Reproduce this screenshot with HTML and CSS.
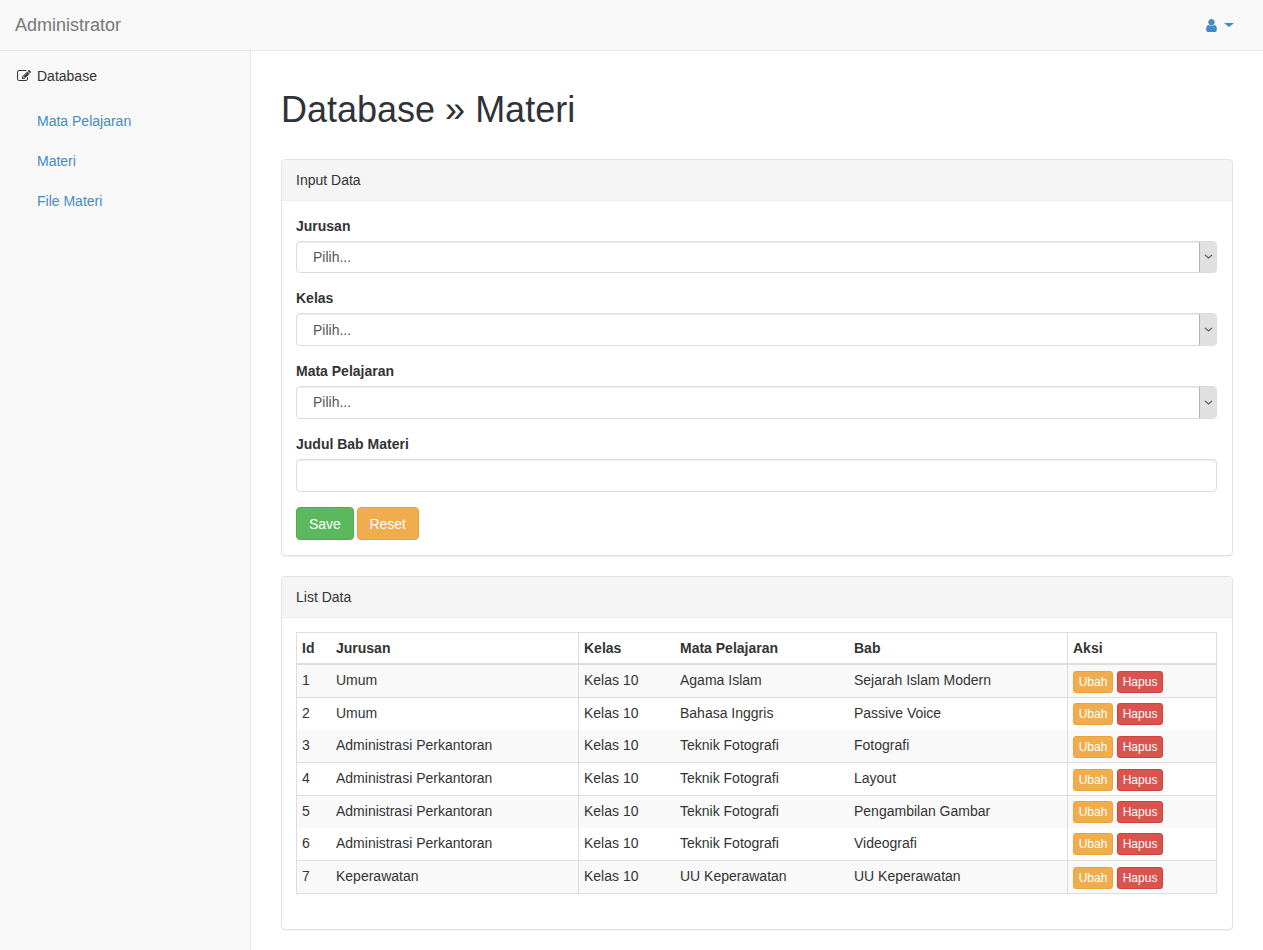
FILE: index.html
```html
<!DOCTYPE html>
<html lang="id">
<head>
<meta charset="utf-8">
<title>Database » Materi</title>
<link rel="stylesheet" href="styles.css">
</head>
<body>
<nav class="navbar">
  <a class="brand" href="#">Administrator</a>
  <a class="user-menu" href="#">
    <svg class="icon-user" viewBox="0 0 1792 1792"><path d="M1536 1399q0 109-62.5 187t-150.5 78h-854q-88 0-150.5-78t-62.5-187q0-85 8.5-160.5t31.5-152 58.5-131 94-89 134.5-34.5q131 128 313 128t313-128q76 0 134.5 34.5t94 89 58.5 131 31.5 152 8.5 160.5zm-256-887q0 159-112.5 271.5t-271.5 112.5-271.5-112.5-112.5-271.5 112.5-271.5 271.5-112.5 271.5 112.5 112.5 271.5z"/></svg>
    <span class="caret"></span>
  </a>
</nav>
<div class="layout">
  <aside class="sidebar">
    <a class="nav-top" href="#">
      <svg class="icon-edit" viewBox="0 0 1792 1792"><path d="M888 1184l116-116-152-152-116 116v56h96v96h56zm440-720q-16-16-33 1l-350 350q-17 17-1 33t33-1l350-350q17-17 1-33zm80 594v190q0 119-84.5 203.5t-203.5 84.5h-832q-119 0-203.5-84.5t-84.5-203.5v-832q0-119 84.5-203.5t203.5-84.5h832q63 0 117 25 15 7 18 23 3 17-9 29l-49 49q-14 14-32 8-23-6-45-6h-832q-66 0-113 47t-47 113v832q0 66 47 113t113 47h832q66 0 113-47t47-113v-126q0-13 9-22l64-64q15-15 35-7t20 29zm-96-738l288 288-672 672h-288v-288zm444 132l-92 92-288-288 92-92q28-28 68-28t68 28l152 152q28 28 28 68t-28 68z"/></svg>
      <span>Database</span>
    </a>
    <ul class="nav-sub">
      <li><a href="#">Mata Pelajaran</a></li>
      <li><a href="#">Materi</a></li>
      <li><a href="#">File Materi</a></li>
    </ul>
  </aside>
  <main class="content">
    <h1 class="page-title">Database » Materi</h1>

    <section class="panel">
      <div class="panel-heading">Input Data</div>
      <form class="panel-body">
        <div class="form-group">
          <label>Jurusan</label>
          <div class="select-wrap">
            <select class="control"><option>Pilih...</option></select>
            <span class="select-arrow"><svg viewBox="0 0 10 6"><path d="M1 1l4 3.4L9 1"/></svg></span>
          </div>
        </div>
        <div class="form-group">
          <label>Kelas</label>
          <div class="select-wrap">
            <select class="control"><option>Pilih...</option></select>
            <span class="select-arrow"><svg viewBox="0 0 10 6"><path d="M1 1l4 3.4L9 1"/></svg></span>
          </div>
        </div>
        <div class="form-group">
          <label>Mata Pelajaran</label>
          <div class="select-wrap">
            <select class="control"><option>Pilih...</option></select>
            <span class="select-arrow"><svg viewBox="0 0 10 6"><path d="M1 1l4 3.4L9 1"/></svg></span>
          </div>
        </div>
        <div class="form-group">
          <label>Judul Bab Materi</label>
          <input class="control control-text" type="text">
        </div>
        <div class="actions">
          <button type="button" class="btn btn-save">Save</button>
          <button type="button" class="btn btn-reset">Reset</button>
        </div>
      </form>
    </section>

    <section class="panel panel-list">
      <div class="panel-heading">List Data</div>
      <div class="panel-body">
        <table class="data-table">
          <colgroup>
            <col class="col-id"><col class="col-jurusan"><col class="col-kelas"><col class="col-mapel"><col class="col-bab"><col>
          </colgroup>
          <thead>
            <tr><th>Id</th><th class="edge">Jurusan</th><th>Kelas</th><th>Mata Pelajaran</th><th class="edge">Bab</th><th>Aksi</th></tr>
          </thead>
          <tbody>
            <tr class="odd"><td>1</td><td class="edge">Umum</td><td>Kelas 10</td><td>Agama Islam</td><td class="edge">Sejarah Islam Modern</td><td class="acts"><a class="mini mini-edit">Ubah</a> <a class="mini mini-del">Hapus</a></td></tr>
            <tr class="lined"><td>2</td><td class="edge">Umum</td><td>Kelas 10</td><td>Bahasa Inggris</td><td class="edge">Passive Voice</td><td class="acts"><a class="mini mini-edit">Ubah</a> <a class="mini mini-del">Hapus</a></td></tr>
            <tr class="odd"><td>3</td><td class="edge">Administrasi Perkantoran</td><td>Kelas 10</td><td>Teknik Fotografi</td><td class="edge">Fotografi</td><td class="acts"><a class="mini mini-edit">Ubah</a> <a class="mini mini-del">Hapus</a></td></tr>
            <tr class="lined"><td>4</td><td class="edge">Administrasi Perkantoran</td><td>Kelas 10</td><td>Teknik Fotografi</td><td class="edge">Layout</td><td class="acts"><a class="mini mini-edit">Ubah</a> <a class="mini mini-del">Hapus</a></td></tr>
            <tr class="odd lined"><td>5</td><td class="edge">Administrasi Perkantoran</td><td>Kelas 10</td><td>Teknik Fotografi</td><td class="edge">Pengambilan Gambar</td><td class="acts"><a class="mini mini-edit">Ubah</a> <a class="mini mini-del">Hapus</a></td></tr>
            <tr><td>6</td><td class="edge">Administrasi Perkantoran</td><td>Kelas 10</td><td>Teknik Fotografi</td><td class="edge">Videografi</td><td class="acts"><a class="mini mini-edit">Ubah</a> <a class="mini mini-del">Hapus</a></td></tr>
            <tr class="odd lined"><td>7</td><td class="edge">Keperawatan</td><td>Kelas 10</td><td>UU Keperawatan</td><td class="edge">UU Keperawatan</td><td class="acts"><a class="mini mini-edit">Ubah</a> <a class="mini mini-del">Hapus</a></td></tr>
          </tbody>
        </table>
      </div>
    </section>
  </main>
</div>
</body>
</html>
```
FILE: styles.css
```css
* { box-sizing: border-box; }
html, body { margin: 0; padding: 0; }
body {
  font-family: "Liberation Sans", Arial, sans-serif;
  font-size: 14px;
  line-height: 20px;
  color: #333;
  background: #fff;
}
a { color: #428bca; text-decoration: none; }

.navbar {
  display: flex;
  align-items: center;
  justify-content: space-between;
  height: 51px;
  padding: 0 29px 0 15px;
  background: #f8f8f8;
  border-bottom: 1px solid #e7e7e7;
}
.brand { font-size: 18px; color: #777; }
.user-menu { display: flex; align-items: center; gap: 5px; }
.icon-user { width: 15px; height: 15px; fill: #428bca; }
.caret {
  width: 0;
  height: 0;
  border-top: 4px solid #428bca;
  border-left: 5px solid transparent;
  border-right: 5px solid transparent;
}

.layout { display: flex; min-height: 899px; }
.sidebar {
  flex: 0 0 251px;
  padding-top: 5px;
  background: #f8f8f8;
  border-right: 1px solid #e7e7e7;
}
.nav-top {
  display: flex;
  align-items: center;
  gap: 6px;
  height: 40px;
  padding-left: 17px;
  color: #333;
}
.icon-edit { width: 14px; height: 14px; fill: #333; }
.nav-sub { list-style: none; margin: 5px 0 0; padding: 0; }
.nav-sub a { display: block; padding: 10px 15px 10px 37px; }

.content { flex: 1; min-width: 0; padding: 0 30px 20px; }
.page-title {
  margin: 39px 0 29px;
  font-size: 36px;
  line-height: 39.6px;
  font-weight: 500;
  color: #2f3338;
}

.panel {
  margin-bottom: 20px;
  background: #fff;
  border: 1px solid #e3e3e3;
  border-radius: 4px;
  box-shadow: 0 1px 1px rgba(0, 0, 0, .05);
}
.panel-heading {
  height: 41px;
  padding: 10px 15px 10px 14px;
  background: #f5f5f5;
  border-bottom: 1px solid #eee;
  border-radius: 3px 3px 0 0;
}
.panel-body { display: block; padding: 15px 15px 15px 14px; }

.form-group { margin-bottom: 15px; }
label { display: block; margin-bottom: 5px; font-weight: 700; }
.control {
  display: block;
  width: 100%;
  height: 32.67px;
  padding: 6px 12px;
  font: inherit;
  color: #555;
  background: #fff;
  border: 1px solid #dcdcdc;
  border-radius: 4px;
  box-shadow: inset 0 1px 1px rgba(0, 0, 0, .075);
}
.control-text { height: 33px; }
select.control { appearance: none; padding: 0 12px 0 16px; }
.select-wrap { position: relative; }
.select-arrow {
  position: absolute;
  top: 1px;
  right: 0;
  bottom: 1px;
  display: flex;
  align-items: center;
  justify-content: center;
  width: 18px;
  background: #e0e0e0;
  border-left: 1px solid #b4b4b4;
  border-radius: 0 4px 4px 0;
}
.select-arrow svg { width: 9px; height: 5.4px; fill: none; stroke: #555; stroke-width: 1.2; }

.actions { display: flex; gap: 3px; }
.btn {
  height: 33px;
  padding: 1px 12px 0;
  font: inherit;
  color: #fff;
  border: 1px solid;
  border-radius: 4px;
}
.btn-save { background: #5cb85c; border-color: #4cae4c; }
.btn-reset { padding: 1px 11.5px 0; background: #f0ad4e; border-color: #eea236; }

.panel-list .panel-body { padding-top: 14.4px; padding-bottom: 35.6px; }
.data-table {
  width: 100%;
  table-layout: fixed;
  border-collapse: collapse;
  border: 1px solid #ddd;
}
.col-id { width: 34.5px; }
.col-jurusan { width: 247.5px; }
.col-kelas { width: 96.5px; }
.col-mapel { width: 174px; }
.col-bab { width: 218.5px; }
.data-table th, .data-table td {
  padding: 5px;
  text-align: left;
  vertical-align: top;
}
.data-table th { height: 32px; font-weight: 700; border-bottom: 2px solid #ddd; }
.data-table td { height: 32.67px; }
.data-table .edge { border-right: 1px solid #ddd; }
.data-table .odd { background: #f9f9f9; }
.data-table .lined td { border-top: 1px solid #ddd; }
.data-table .acts { padding-top: 5.75px; padding-bottom: 0; font-size: 12px; white-space: nowrap; }
.mini {
  display: inline-block;
  vertical-align: top;
  height: 22px;
  padding: 1px 4.7px;
  font-size: 12px;
  line-height: 18px;
  color: #fff;
  border: 1px solid;
  border-radius: 3px;
}
.mini-edit { margin-right: .6px; background: #f0ad4e; border-color: #eea236; }
.mini-del { background: #d9534f; border-color: #d43f3a; }
```
